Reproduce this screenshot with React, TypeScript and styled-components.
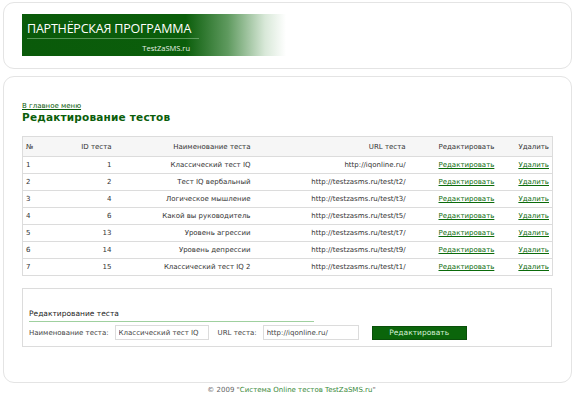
import styled, { createGlobalStyle } from "styled-components";

const GlobalStyle = createGlobalStyle`
  html, body {
    margin: 0;
    padding: 0;
    background: #fff;
    font-family: "Liberation Sans", Arial, sans-serif;
  }
`;

type TestRow = {
  num: number;
  id: number;
  name: string;
  url: string;
};

const rows: TestRow[] = [
  { num: 1, id: 1, name: "Классический тест IQ", url: "http://iqonline.ru/" },
  { num: 2, id: 2, name: "Тест IQ вербальный", url: "http://testzasms.ru/test/t2/" },
  { num: 3, id: 4, name: "Логическое мышление", url: "http://testzasms.ru/test/t3/" },
  { num: 4, id: 6, name: "Какой вы руководитель", url: "http://testzasms.ru/test/t5/" },
  { num: 5, id: 13, name: "Уровень агрессии", url: "http://testzasms.ru/test/t7/" },
  { num: 6, id: 14, name: "Уровень депрессии", url: "http://testzasms.ru/test/t9/" },
  { num: 7, id: 15, name: "Классический тест IQ 2", url: "http://testzasms.ru/test/t1/" }
];

const Page = styled.div`
  display: flex;
  flex-direction: column;
  padding: 2px 4px 0 3px;
`;

const Card = styled.div<{ $height: number }>`
  box-sizing: border-box;
  height: ${p => p.$height}px;
  border: 1px solid #e4e4e4;
  border-radius: 11px;
  background: #fff;
`;

const HeaderCard = styled(Card)`
  padding: 11px 0 0 18px;
`;

const Banner = styled.div`
  width: 264px;
  height: 42px;
  box-sizing: border-box;
  padding: 7px 0 0 5px;
  background: linear-gradient(90deg, #0a5a0a 0%, #0b5e0b 62%, #5f9a5f 78%, #d8e8d8 92%, #ffffff 100%);
  color: #fff;
  font-family: "Open Sans", "Noto Sans", sans-serif;
`;

const BannerTitle = styled.div`
  font-size: 12.5px;
  line-height: 15px;
  letter-spacing: -0.2px;
  width: 172px;
  padding-bottom: 2px;
  border-bottom: 1px solid rgba(150, 200, 150, 0.55);
`;

const BannerSub = styled.div`
  width: 163px;
  text-align: right;
  font-size: 7.5px;
  line-height: 10px;
  margin-top: 4px;
  color: #e6f0e6;
`;

const MainCard = styled(Card)`
  margin-top: 7px;
  padding: 25px 20px 0 18px;
`;

const BackLink = styled.a`
  display: block;
  font-family: "DejaVu Sans", Verdana, sans-serif;
  font-size: 7px;
  line-height: 9px;
  color: #0a5a0a;
  text-decoration: underline;
`;

const Title = styled.h1`
  margin: 0 0 12px;
  font-family: "DejaVu Sans", Verdana, sans-serif;
  font-size: 10.5px;
  line-height: 13px;
  font-weight: bold;
  color: #0b5e0b;
  letter-spacing: 0.2px;
`;

const Table = styled.table`
  width: 530px;
  border-collapse: collapse;
  table-layout: fixed;
  border: 1px solid #dcdcdc;
  font-family: "DejaVu Sans", Verdana, sans-serif;
  font-size: 7px;
  color: #333;
`;

const Th = styled.th<{ $align: string; $pl?: number }>`
  height: 19px;
  padding: 0 3px 0 ${p => p.$pl ?? 3}px;
  font-weight: normal;
  text-align: ${p => p.$align};
  background: #f6f6f6;
  border-bottom: 1px solid #dcdcdc;
  white-space: nowrap;
`;

const Td = styled.td<{ $align: string; $pl?: number }>`
  height: 16px;
  padding: 0 3px 0 ${p => p.$pl ?? 3}px;
  text-align: ${p => p.$align};
  border-bottom: 1px solid #dcdcdc;
  white-space: nowrap;
`;

const RowLink = styled.a`
  color: #0b6b0b;
  text-decoration: underline;
`;

const FormBox = styled.div`
  box-sizing: border-box;
  width: 530px;
  height: 59px;
  margin-top: 12px;
  border: 1px solid #dcdcdc;
  padding: 20px 0 0 6px;
  font-family: "DejaVu Sans", Verdana, sans-serif;
`;

const FormTitle = styled.div`
  width: 285px;
  font-size: 7.5px;
  line-height: 10px;
  color: #222;
  padding-bottom: 2px;
  border-bottom: 1px solid #9fd09f;
`;

const FormRow = styled.div`
  display: flex;
  align-items: center;
  margin-top: 3px;
  font-size: 7px;
  color: #444;
`;

const Label = styled.span<{ $ml?: number }>`
  margin-left: ${p => p.$ml ?? 0}px;
  margin-right: 6px;
`;

const Input = styled.input<{ $w: number }>`
  box-sizing: border-box;
  width: ${p => p.$w}px;
  height: 15px;
  padding: 0 3px;
  border: 1px solid #dcdcdc;
  font-family: "DejaVu Sans", Verdana, sans-serif;
  font-size: 7px;
  color: #444;
  outline: none;
`;

const Button = styled.button`
  box-sizing: border-box;
  width: 95px;
  height: 14px;
  margin-left: 13px;
  padding: 0;
  background: #0b650b;
  border: 1px solid #0a4f0a;
  color: #d6f0d6;
  font-family: "DejaVu Sans", Verdana, sans-serif;
  font-size: 7.5px;
`;

const Footer = styled.div`
  margin-top: 2px;
  text-align: center;
  font-family: "DejaVu Sans", Verdana, sans-serif;
  font-size: 7px;
  line-height: 10px;
  color: #666;
  padding-left: 8px;
`;

const FooterName = styled.span`
  color: #3a8a3a;
`;

const App = () => {
  return (
    <>
      <GlobalStyle />
      <Page>
        <HeaderCard $height={67}>
          <Banner>
            <BannerTitle>ПАРТНЁРСКАЯ ПРОГРАММА</BannerTitle>
            <BannerSub>TestZaSMS.ru</BannerSub>
          </Banner>
        </HeaderCard>
        <MainCard $height={307}>
          <BackLink href="#">В главное меню</BackLink>
          <Title>Редактирование тестов</Title>
          <Table>
            <colgroup>
              <col style={{ width: 38 }} />
              <col style={{ width: 54 }} />
              <col style={{ width: 139 }} />
              <col style={{ width: 155 }} />
              <col style={{ width: 103 }} />
              <col style={{ width: 41 }} />
            </colgroup>
            <thead>
              <tr>
                <Th $align="left">№</Th>
                <Th $align="right">ID теста</Th>
                <Th $align="right">Наименование теста</Th>
                <Th $align="right">URL теста</Th>
                <Th $align="left" $pl={30}>Редактировать</Th>
                <Th $align="right">Удалить</Th>
              </tr>
            </thead>
            <tbody>
              {rows.map(r => (
                <tr key={r.num}>
                  <Td $align="left">{r.num}</Td>
                  <Td $align="right">{r.id}</Td>
                  <Td $align="right">{r.name}</Td>
                  <Td $align="right">{r.url}</Td>
                  <Td $align="left" $pl={30}>
                    <RowLink href="#">Редактировать</RowLink>
                  </Td>
                  <Td $align="right">
                    <RowLink href="#">Удалить</RowLink>
                  </Td>
                </tr>
              ))}
            </tbody>
          </Table>
          <FormBox>
            <FormTitle>Редактирование теста</FormTitle>
            <FormRow>
              <Label>Наименование теста:</Label>
              <Input $w={94} defaultValue="Классический тест IQ" />
              <Label $ml={9}>URL теста:</Label>
              <Input $w={96} defaultValue="http://iqonline.ru/" />
              <Button>Редактировать</Button>
            </FormRow>
          </FormBox>
        </MainCard>
        <Footer>
          © 2009 "<FooterName>Система Online тестов TestZaSMS.ru</FooterName>"
        </Footer>
      </Page>
    </>
  );
};

export default App;
